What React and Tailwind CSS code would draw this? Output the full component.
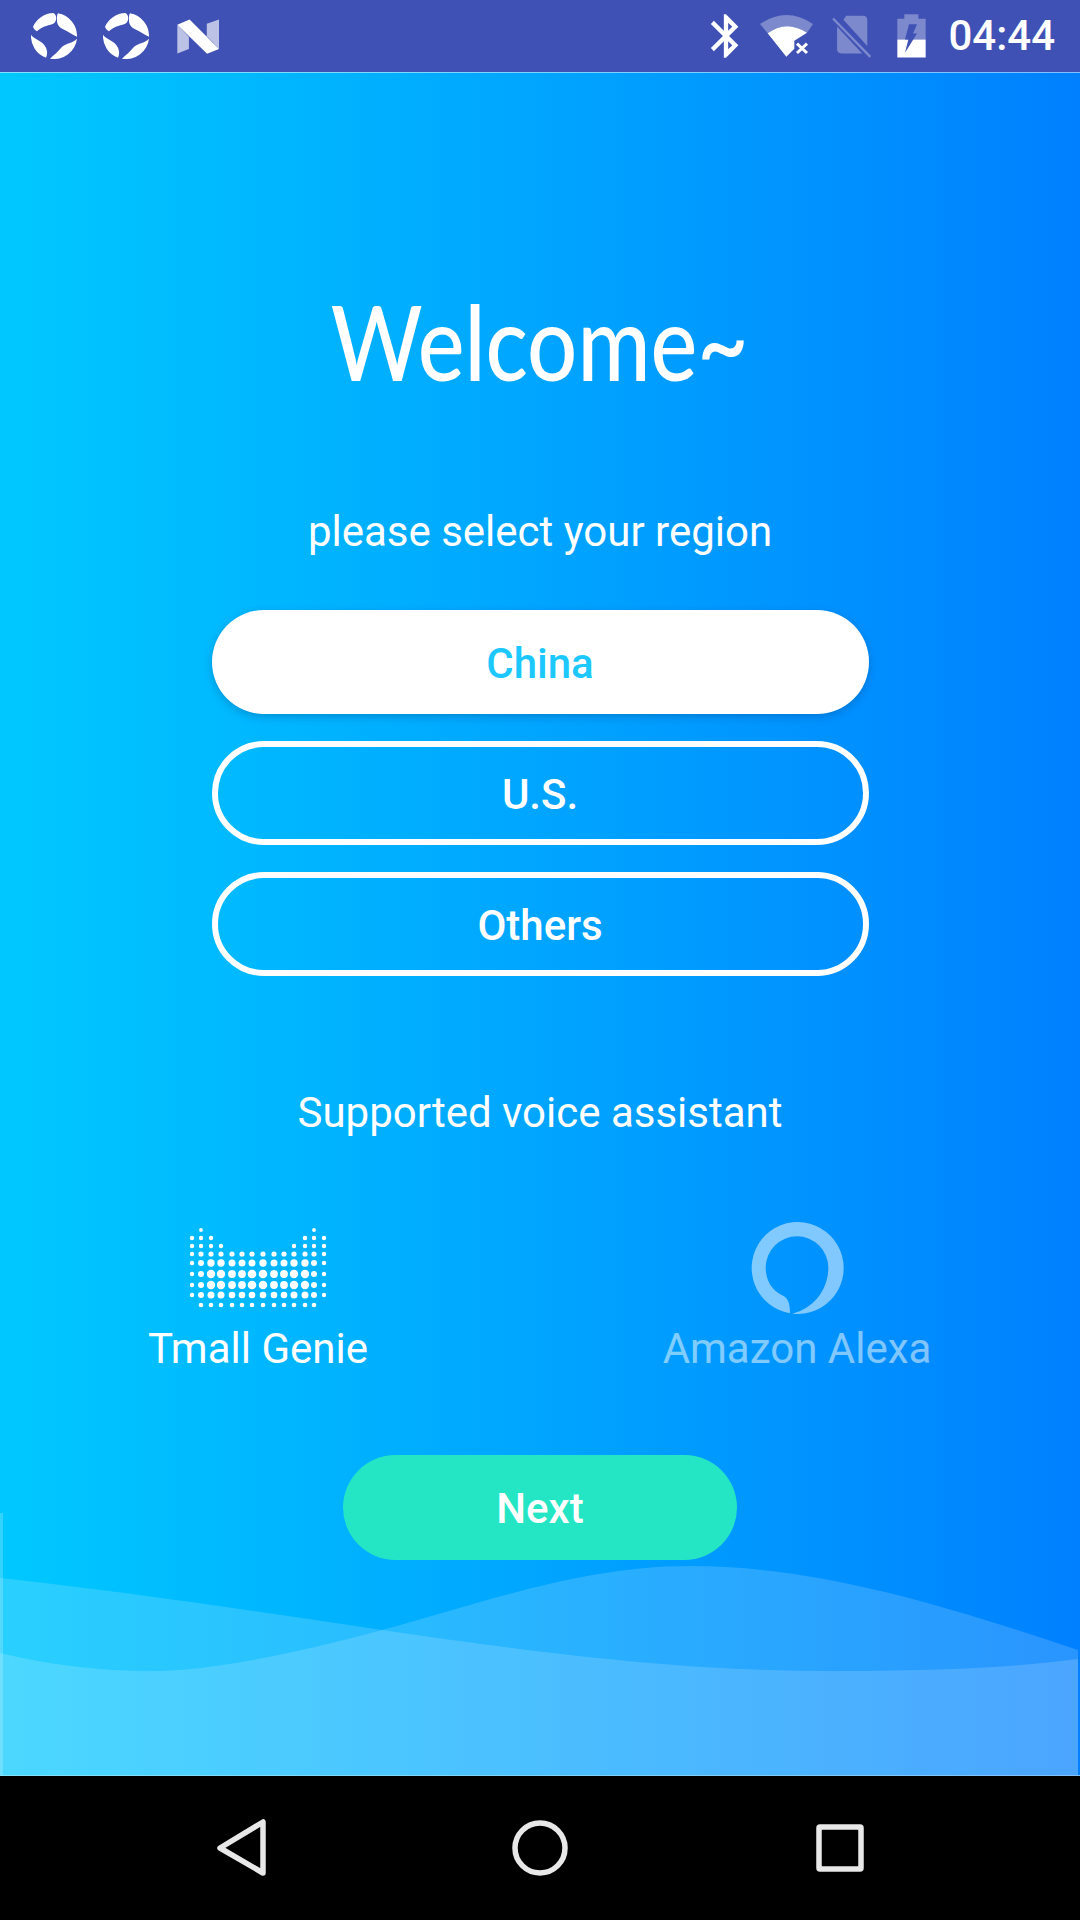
import React from 'react';

const FONT = "font-['Roboto',sans-serif]";

const Swirl = () => (
  <svg width="46" height="46" viewBox="15 15 138 138" fill="#fff">
    <path d="M21 56 A69 69 0 0 1 82 15 C92 20 94 34 86 44 C76 53 52 50 33 70 C28 67 23 62 21 56 Z" />
    <path d="M96 16 A69 69 0 0 1 153 86 C140 81 130 73 116 66 C104 61 94 54 93 40 C93 30 92 22 96 16 Z" />
    <path d="M153 92 A69 69 0 0 1 72 152 C85 141 96 131 107 118 C118 105 140 106 153 92 Z" />
    <path d="M15 80 A69 69 0 0 0 60 149 C67 135 63 118 50 106 C40 96 23 92 15 80 Z" />
  </svg>
);

const NLogo = () => (
  <svg width="43" height="35" viewBox="530 55 130 105">
    <path d="M531 72 L566 108 V145 L531 159 Z" fill="#fff" fillOpacity="0.65" />
    <path d="M620 69 L657 56 V145 L620 107 Z" fill="#fff" fillOpacity="0.65" />
    <path d="M531 72 L568 56 L657 145 L621 160 Z" fill="#fff" />
  </svg>
);

const BluetoothIcon = () => (
  <svg width="52" height="52" viewBox="0 0 24 24" fill="#fff">
    <path d="M17.71 7.71L12 2h-1v7.59L6.41 5 5 6.41 10.59 12 5 17.59 6.41 19 11 14.41V22h1l5.71-5.71-4.3-4.29 4.3-4.29zM13 5.83l1.88 1.88L13 9.59V5.83zm1.88 10.46L13 18.17v-3.76l1.88 1.88z" />
  </svg>
);

const WifiIcon = () => (
  <svg width="55" height="44" viewBox="240 42 165 132">
    <path d="M243 72 Q322 18 402 72 L384 98 Q322 58 266 100 Z" fill="#fff" fillOpacity="0.32" />
    <path d="M266 100 Q322 58 384 98 L346 122 V146 L322 170 Z" fill="#fff" />
    <path d="M354 131 L384 159 M384 131 L354 159" stroke="#fff" strokeWidth="9" />
  </svg>
);

const SimOffIcon = () => (
  <svg width="42" height="44" viewBox="455 45 125 130">
    <path d="M500 50 H550 Q563 50 563 63 V140 L492 62 Z M473 82 L548 162 H486 Q473 162 473 149 Z" fill="#fff" fillOpacity="0.32" />
    <path d="M461 58 L572 172" stroke="#fff" strokeOpacity="0.32" strokeWidth="7" />
  </svg>
);

const BatteryIcon = () => (
  <svg width="29" height="44" viewBox="656 42 87 131">
    <path d="M678 42 H720 V56 H742 V118 H657 V56 H678 Z" fill="#fff" fillOpacity="0.32" />
    <path d="M657 118 H742 V172 H657 Z" fill="#fff" />
    <path d="M692 72 H716 L704 100 H716 L680 158 L690 118 H680 Z" fill="#3f51b5" />
  </svg>
);

const StatusBar = () => (
  <div className={`h-[72px] bg-[#3f51b5] flex items-center shrink-0 ${FONT}`}>
    <div className="ml-[31px]"><Swirl /></div>
    <div className="ml-[26px]"><Swirl /></div>
    <div className="ml-[28px]"><NLogo /></div>
    <div className="ml-auto flex items-center">
      <BluetoothIcon />
      <div className="ml-[7px]"><WifiIcon /></div>
      <div className="ml-[17px]"><SimOffIcon /></div>
      <div className="ml-[24px]"><BatteryIcon /></div>
      <span className="ml-[22px] mr-[25px] text-[42px] leading-none font-medium text-white">04:44</span>
    </div>
  </div>
);

// rows of the cat-shaped dot logo
const DOT_X = [18, 27, 37, 47, 58, 68, 78, 89, 100, 110, 120, 131, 140, 150];
const ALL_COLS = [0, 1, 2, 3, 4, 5, 6, 7, 8, 9, 10, 11, 12, 13];
const DOT_ROWS = [
  { y: 4, cols: [1, 12], r: [1.9] },
  { y: 12, cols: [0, 1, 2, 11, 12, 13], r: [2.2] },
  { y: 20, cols: [0, 1, 2, 3, 10, 11, 12, 13], r: [2.2] },
  { y: 28, cols: ALL_COLS, r: [2.2, 2.6, 2.6, 2.6, 2.6, 2.6, 2.6, 2.6, 2.6, 2.6, 2.6, 2.6, 2.6, 2.2] },
  { y: 37, cols: ALL_COLS, r: [2.2, 3, 3.7, 3.7, 3.5, 3.5, 3.5, 3.7, 3.5, 3.5, 3.7, 3.7, 3, 2.2] },
  { y: 48, cols: ALL_COLS, r: [2.2, 3, 4.2, 4.2, 3.9, 3.9, 4.3, 4.3, 3.9, 3.9, 4.2, 4.2, 3, 2.2] },
  { y: 59, cols: ALL_COLS, r: [2.2, 3, 4.2, 4.2, 3.9, 3.9, 4.3, 4.3, 3.9, 3.9, 4.2, 4.2, 3, 2.2] },
  { y: 69, cols: ALL_COLS, r: [2.2, 3, 3.5, 3.5, 3.3, 3.3, 3.3, 3.3, 3.3, 3.3, 3.5, 3.5, 3, 2.2] },
  { y: 79, cols: [1, 2, 3, 4, 5, 6, 7, 8, 9, 10, 11, 12], r: [2.3] },
];

const TmallLogo = () => (
  <svg width="168" height="84" viewBox="0 0 168 84" fill="#fff">
    {DOT_ROWS.flatMap((row) =>
      row.cols.map((c) => (
        <circle
          key={`${row.y}-${c}`}
          cx={DOT_X[c]}
          cy={row.y}
          r={row.r.length > 1 ? row.r[c] : row.r[0]}
        />
      ))
    )}
  </svg>
);

const AlexaLogo = () => (
  <svg width="95" height="95" viewBox="300 60 285 285" fill="#fff">
    <path d="M420 340 A138 138 0 1 1 427 341 C490 325 535 270 535 203 A94 94 0 1 0 347 203 C347 240 365 270 395 285 C412 292 420 305 420 340 Z" />
  </svg>
);

const Waves = () => (
  <>
    <svg className="absolute left-0 bottom-0" width="1078" height="215" viewBox="0 1560 1078 215" fill="#fff">
      <path d="M0 1578 C130 1592 260 1612 382 1630 C560 1656 690 1671 830 1671 C930 1671 1010 1668 1078 1659 V1775 H0 Z" fillOpacity="0.16" />
      <path d="M0 1653 C50 1665 100 1671 151 1671 C205 1671 282 1657 382 1630 C472 1606 580 1566 689 1566 C810 1566 930 1600 1078 1650 V1775 H0 Z" fillOpacity="0.16" />
    </svg>
    <div className="absolute left-0 bottom-0 w-[3px] h-[262px] bg-white/20" />
  </>
);

const RegionButton = ({ label, selected }) => (
  <button
    className={
      selected
        ? 'h-[104px] w-[657px] pt-[2px] rounded-full bg-white text-[#1cc8ff] text-[42px] font-medium shadow-[0_3px_8px_rgba(0,60,120,0.3)]'
        : 'h-[104px] w-[657px] pt-[2px] rounded-full border-[6px] border-white text-white text-[42px] font-medium'
    }
  >
    {label}
  </button>
);

const NavBar = () => (
  <div className="h-[144px] bg-black flex items-center shrink-0 pb-[1px]">
    <svg className="ml-[214px]" width="54" height="60" viewBox="0 0 54 60" fill="none" stroke="#e8e8e8" strokeWidth="5.5" strokeLinejoin="round">
      <path d="M49 4 V55 L6 30 Z" />
    </svg>
    <svg className="ml-[242px]" width="60" height="60" viewBox="0 0 60 60" fill="none" stroke="#e8e8e8" strokeWidth="5.5">
      <circle cx="30" cy="30" r="25" />
    </svg>
    <svg className="ml-[244px]" width="52" height="52" viewBox="0 0 52 52" fill="none" stroke="#e8e8e8" strokeWidth="5.5" strokeLinejoin="round">
      <rect x="5" y="5" width="42" height="42" rx="1" />
    </svg>
  </div>
);

export default function App() {
  return (
    <div className={`w-[1080px] h-[1920px] flex flex-col overflow-hidden ${FONT}`}>
      <StatusBar />
      <div className="relative flex-1 flex flex-col items-center border-y border-white/50 bg-gradient-to-r from-[#00c8ff] to-[#0080ff] text-white">
        <Waves />
        <h1 className="relative mt-[218px] text-[104px] leading-[100px] font-['Lato',sans-serif] font-medium scale-x-[0.85]">Welcome~</h1>
        <p className="relative mt-[117px] text-[42px] leading-[48px]">please select your region</p>
        <div className="relative mt-[54px] flex flex-col gap-[27px]">
          <RegionButton label="China" selected />
          <RegionButton label="U.S." />
          <RegionButton label="Others" />
        </div>
        <p className="relative mt-[113px] text-[42px] leading-[48px]">Supported voice assistant</p>
        <div className="relative mt-[83px] w-full flex pl-[123px] gap-[269px]">
          <div className="w-[270px] flex flex-col items-center">
            <div className="h-[95px] flex items-center"><TmallLogo /></div>
            <span className="text-[42px] leading-[48px] mt-[10px]">Tmall Genie</span>
          </div>
          <div className="w-[270px] flex flex-col items-center opacity-50">
            <AlexaLogo />
            <span className="text-[42px] leading-[48px] mt-[10px]">Amazon Alexa</span>
          </div>
        </div>
        <button className="relative mt-[82px] h-[105px] w-[394px] pt-[2px] rounded-full bg-[#25e6c4] text-white text-[42px] font-medium">Next</button>
      </div>
      <NavBar />
    </div>
  );
}
